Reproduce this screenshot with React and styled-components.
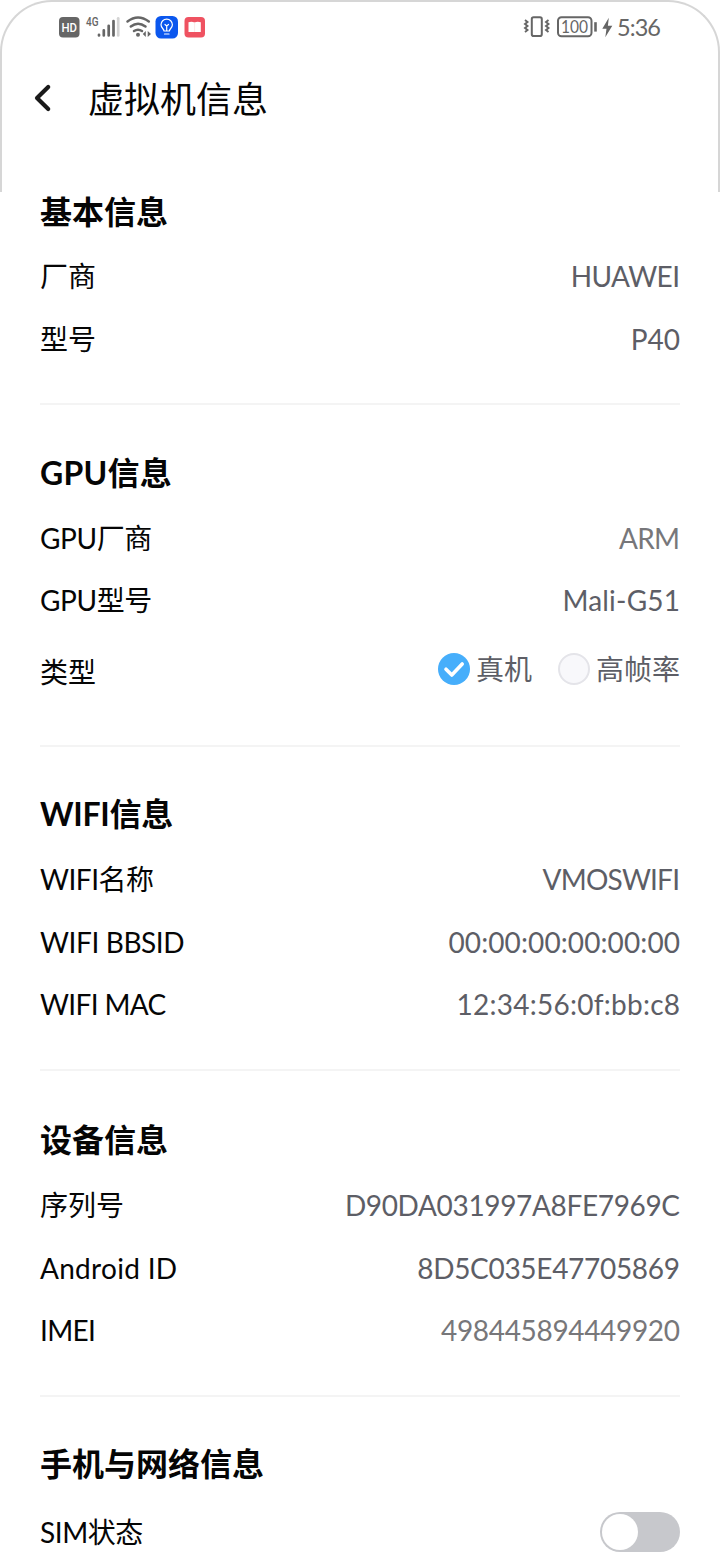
import React from "react";
import styled, { createGlobalStyle } from "styled-components";

const GlobalStyle = createGlobalStyle`
  *, *::before, *::after { box-sizing: border-box; }
  body {
    margin: 0;
    background: #fff;
    color: #050505;
    font-family: Lato, "Noto Sans CJK SC", sans-serif;
  }
`;

const Screen = styled.main`
  position: relative;
  width: 720px;
  height: 1560px;
  overflow: hidden;
  background: #fff;
`;

const TopFrame = styled.div`
  position: absolute;
  inset: 0 0 auto 0;
  height: 192px;
  border: 2px solid #d6d6d6;
  border-bottom: 0;
  border-radius: 52px 52px 0 0;
  pointer-events: none;
`;

const StatusBar = styled.header`
  display: flex;
  justify-content: space-between;
  height: 54px;
  padding: 0 59px;
`;

const StatusIcons = styled.svg`
  display: block;
  flex: none;
  font-family: ${(p) => p.$font || "Roboto, sans-serif"};
`;

const Header = styled.div`
  display: flex;
  align-items: center;
  height: 88px;
  padding-left: 34px;
  margin-bottom: 35px;
`;

const BackButton = styled.button`
  display: flex;
  width: 54px;
  padding: 0;
  border: 0;
  background: none;
`;

const PageTitle = styled.h1`
  margin: 0;
  padding-top: 1px;
  font-size: 36px;
  font-weight: 400;
  line-height: 54px;
`;

const Section = styled.section`
  margin: 0 40px;
  padding: ${(p) => p.$top ?? 34}px 0 ${(p) => p.$bottom ?? 33}px;
  border-bottom: ${(p) => (p.$last ? "0" : "2px solid #f4f4f4")};
`;

const SectionTitle = styled.h2`
  display: flex;
  align-items: center;
  height: 67px;
  margin: 0;
  padding-bottom: 4px;
  font-size: 32px;
  font-weight: 700;
  letter-spacing: ${(p) => p.$track ?? 0}px;
  white-space: pre;
`;

const Row = styled.div`
  display: flex;
  align-items: center;
  justify-content: space-between;
  height: ${(p) => p.$height ?? 62.67}px;
  font-size: 28px;
  white-space: pre;
`;

const Label = styled.span`
  padding-bottom: ${(p) => p.$lift ?? 0}px;
  letter-spacing: ${(p) => p.$track ?? 0}px;
`;

const Value = styled.span`
  color: ${(p) => (p.$muted ? "#77777a" : "#5d5e66")};
  letter-spacing: ${(p) => p.$track ?? 0}px;
  margin-right: ${(p) => -(p.$track ?? 0)}px;
`;

const RadioGroup = styled.div`
  display: flex;
  gap: 26px;
  padding-bottom: 6px;
`;

const Radio = styled.div`
  display: flex;
  align-items: center;
  gap: 6px;
  color: #5d5e66;
`;

const RadioText = styled.span`
  margin-top: -2px;
`;

const RadioDot = styled.span`
  display: flex;
  align-items: center;
  justify-content: center;
  width: 32px;
  height: 32px;
  border: ${(p) => (p.$checked ? "0" : "2px solid #e4e4e9")};
  border-radius: 50%;
  background: ${(p) => (p.$checked ? "#46aefb" : "#f8f8fb")};
`;

const Switch = styled.span`
  display: flex;
  width: 80px;
  height: 40px;
  padding: 2px;
  border-radius: 20px;
  background: #c7c8cc;
`;

const Knob = styled.span`
  width: 36px;
  height: 36px;
  border-radius: 50%;
  background: #fff;
`;

function LeftStatus() {
  return (
    <StatusIcons width="150" height="54" viewBox="59 0 150 54" fill="none">
      <rect x="59" y="17" width="20.500" height="20.500" rx="4" fill="#666" />
      <text x="61.500" y="32" fontSize="12.500" fontWeight="500" fill="#fff" textLength="15.500" lengthAdjust="spacingAndGlyphs">HD</text>
      <text x="86" y="26" fontSize="12.500" fontWeight="500" fill="#666" textLength="12.500" lengthAdjust="spacingAndGlyphs">4G</text>
      <g strokeWidth="2.700" strokeLinecap="round" stroke="#666">
        <path d="M99 34.800v.7M103.800 30.300v5.200M108.700 25.800v9.700M113.500 21v14.500" />
        <path d="M118.200 18.300v17.200" stroke="#d4d4d4" />
      </g>
      <g stroke="#666" strokeWidth="2.500" strokeLinecap="round">
        <path d="M127.500 21.500Q138 13.500 148.800 21.500" />
        <path d="M130.800 26.500Q138 20.900 145.500 26.500" />
        <path d="M134 31Q138 28.400 142 31" />
      </g>
      <circle cx="138" cy="34.700" r="2" fill="#666" />
      <path d="M145.800 31v6l-3-3zM147.700 31v6l3.300-3z" fill="#666" />
      <rect x="155.500" y="16" width="22.500" height="22.500" rx="5.500" fill="#0b57ee" />
      <path d="M164 31c0-2.200-3-3-3-6.200a5.700 5.700 0 0 1 11.400 0c0 3.200-3 4-3 6.200zM164.500 34h4.500M166.700 30.500v-4.500l-1.700-1.500M166.700 26l1.800-1.500" stroke="#fff" strokeWidth="1.200" strokeLinecap="round" strokeLinejoin="round" />
      <rect x="184.500" y="17" width="20.500" height="20.500" rx="4" fill="#ef5261" />
      <path d="M188.500 22.300q3.300-1 6 .2q2.800-1.200 6.300-.2v9.700h-12.300z" fill="#fff" />
      <path d="M194.600 22.500v9.500" stroke="#fbdfe1" strokeWidth=".8" />
    </StatusIcons>
  );
}

function RightStatus() {
  return (
    <StatusIcons width="138" height="54" viewBox="523 0 138 54" fill="none" $font="Lato, sans-serif">
      <g stroke="#666" strokeWidth="2">
        <rect x="531.800" y="17.200" width="10" height="18.800" rx="1.800" />
        <path d="M525 20l2.500 2-2.500 2 2.500 2-2.500 2 2.500 2-2.500 2M548.500 20l-2.500 2 2.500 2-2.500 2 2.500 2-2.500 2 2.500 2" strokeWidth="1.900" />
        <rect x="558" y="17.300" width="33.500" height="19" rx="3.500" />
        <path d="M595.500 22.200v9.400" strokeWidth="2.600" />
      </g>
      <text x="561" y="33.300" fontSize="18" fill="#666" textLength="27" lengthAdjust="spacingAndGlyphs">100</text>
      <path d="M608.800 17.800l-6.500 11h4.200l-1.200 8.500 7-11.500h-4.400z" fill="#666" />
      <text x="617" y="35.800" fontSize="23.500" fill="#666" textLength="44">5:36</text>
    </StatusIcons>
  );
}

function Option({ checked, children }) {
  return (
    <Radio>
      <RadioDot $checked={checked}>
        {checked && (
          <svg width="32" height="32" viewBox="0 0 32 32" fill="none">
            <path d="M8 16.200l5.800 5.800L24.200 11" stroke="#fff" strokeWidth="3.600" strokeLinecap="round" strokeLinejoin="round" />
          </svg>
        )}
      </RadioDot>
      <RadioText>{children}</RadioText>
    </Radio>
  );
}

function Item({ label, value, muted, track, labelTrack, lift }) {
  return (
    <Row>
      <Label $track={labelTrack} $lift={lift}>{label}</Label>
      <Value $muted={muted} $track={track}>{value}</Value>
    </Row>
  );
}

export default function App() {
  return (
    <Screen>
      <GlobalStyle />
      <StatusBar>
        <LeftStatus />
        <RightStatus />
      </StatusBar>
      <Header>
        <BackButton aria-label="返回">
          <svg width="18" height="28" viewBox="0 0 18 28" fill="none">
            <path d="M14.200 3L3 14l11.200 11" stroke="#1a1a1a" strokeWidth="4.200" strokeLinecap="round" strokeLinejoin="round" />
          </svg>
        </BackButton>
        <PageTitle>虚拟机信息</PageTitle>
      </Header>
      <Section $top={1}>
        <SectionTitle>基本信息</SectionTitle>
        <Item label="厂商" lift={2} value="HUAWEI" track={-0.6} />
        <Item label="型号" lift={2} value="P40" />
      </Section>
      <Section>
        <SectionTitle $track={0.25}>GPU信息</SectionTitle>
        <Item label="GPU厂商" labelTrack={-0.4} lift={2} value="ARM" muted track={-0.7} />
        <Item label="GPU型号" labelTrack={-0.4} lift={2} value="Mali-G51" track={0.2} />
        <Row $height={80}>
          <Label $lift={2}>类型</Label>
          <RadioGroup>
            <Option checked>真机</Option>
            <Option>高帧率</Option>
          </RadioGroup>
        </Row>
      </Section>
      <Section>
        <SectionTitle $track={-0.3}>WIFI信息</SectionTitle>
        <Item label="WIFI名称" labelTrack={-0.5} lift={1} value="VMOSWIFI" track={-0.8} />
        <Item label="WIFI BBSID" labelTrack={-0.4} value="00:00:00:00:00:00" track={0.1} />
        <Item label="WIFI MAC" labelTrack={-0.65} value="12:34:56:0f:bb:c8" track={0.25} />
      </Section>
      <Section $top={36}>
        <SectionTitle>设备信息</SectionTitle>
        <Item label="序列号" lift={1} value="D90DA031997A8FE7969C" track={-0.35} />
        <Item label="Android ID" labelTrack={0.3} value="8D5C035E47705869" track={-0.3} />
        <Item label="IMEI" labelTrack={-0.7} value="498445894449920" muted track={-0.33} />
      </Section>
      <Section $last>
        <SectionTitle>手机与网络信息</SectionTitle>
        <Row $height={68}>
          <Label $track={-0.45} $lift={2}>SIM状态</Label>
          <Switch role="switch" aria-checked="false">
            <Knob />
          </Switch>
        </Row>
      </Section>
      <TopFrame />
    </Screen>
  );
}
